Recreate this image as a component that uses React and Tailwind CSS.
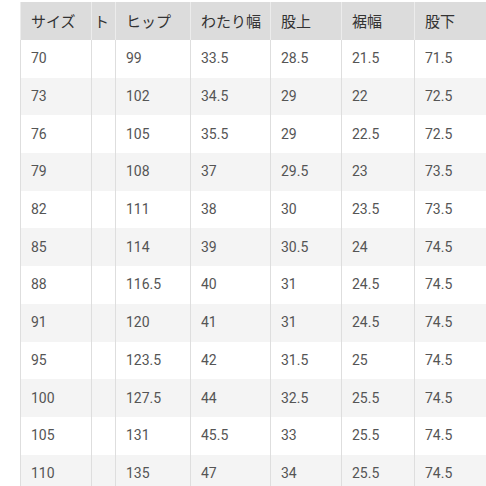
import React from "react";

const rows = [
  ["70", "", "99", "33.5", "28.5", "21.5", "71.5"],
  ["73", "", "102", "34.5", "29", "22", "72.5"],
  ["76", "", "105", "35.5", "29", "22.5", "72.5"],
  ["79", "", "108", "37", "29.5", "23", "73.5"],
  ["82", "", "111", "38", "30", "23.5", "73.5"],
  ["85", "", "114", "39", "30.5", "24", "74.5"],
  ["88", "", "116.5", "40", "31", "24.5", "74.5"],
  ["91", "", "120", "41", "31", "24.5", "74.5"],
  ["95", "", "123.5", "42", "31.5", "25", "74.5"],
  ["100", "", "127.5", "44", "32.5", "25.5", "74.5"],
  ["105", "", "131", "45.5", "33", "25.5", "74.5"],
  ["110", "", "135", "47", "34", "25.5", "74.5"],
];

const headers = ["サイズ", "ト", "ヒップ", "わたり幅", "股上", "裾幅", "股下"];
const widths = ["w-[71px]", "w-[24px]", "w-[75px]", "w-[80px]", "w-[71px]", "w-[73px]", "w-[92px]"];

export default function App() {
  return (
    <div className="w-[486px] h-[486px] overflow-hidden bg-white pt-[2px] pl-[20px]" style={{ fontFamily: '"Noto Sans CJK JP", "Noto Sans", sans-serif' }}>
      <table className="table-fixed border-collapse w-[486px]">
        <thead>
          <tr className="bg-[#dcdcdc] h-[38px]">
            {headers.map((h, i) => (
              <th key={i} className={`${widths[i]} ${i === 1 ? "pl-[2px]" : "pl-[10px]"} text-left font-normal text-[15px] text-[#333] border-l border-[#ececec] whitespace-nowrap`}>
                {h}
              </th>
            ))}
          </tr>
        </thead>
        <tbody>
          {rows.map((r, ri) => (
            <tr key={ri} className={`h-[37.7px] ${ri % 2 === 0 ? "bg-white" : "bg-[#f4f4f4]"}`}>
              {r.map((c, ci) => (
                <td key={ci} className="text-left text-[14px] text-[#555] pl-[10px] border-l border-[#dedede] whitespace-nowrap" style={{ fontFamily: 'Roboto, "Noto Sans", sans-serif' }}>
                  {c}
                </td>
              ))}
            </tr>
          ))}
        </tbody>
      </table>
    </div>
  );
}
